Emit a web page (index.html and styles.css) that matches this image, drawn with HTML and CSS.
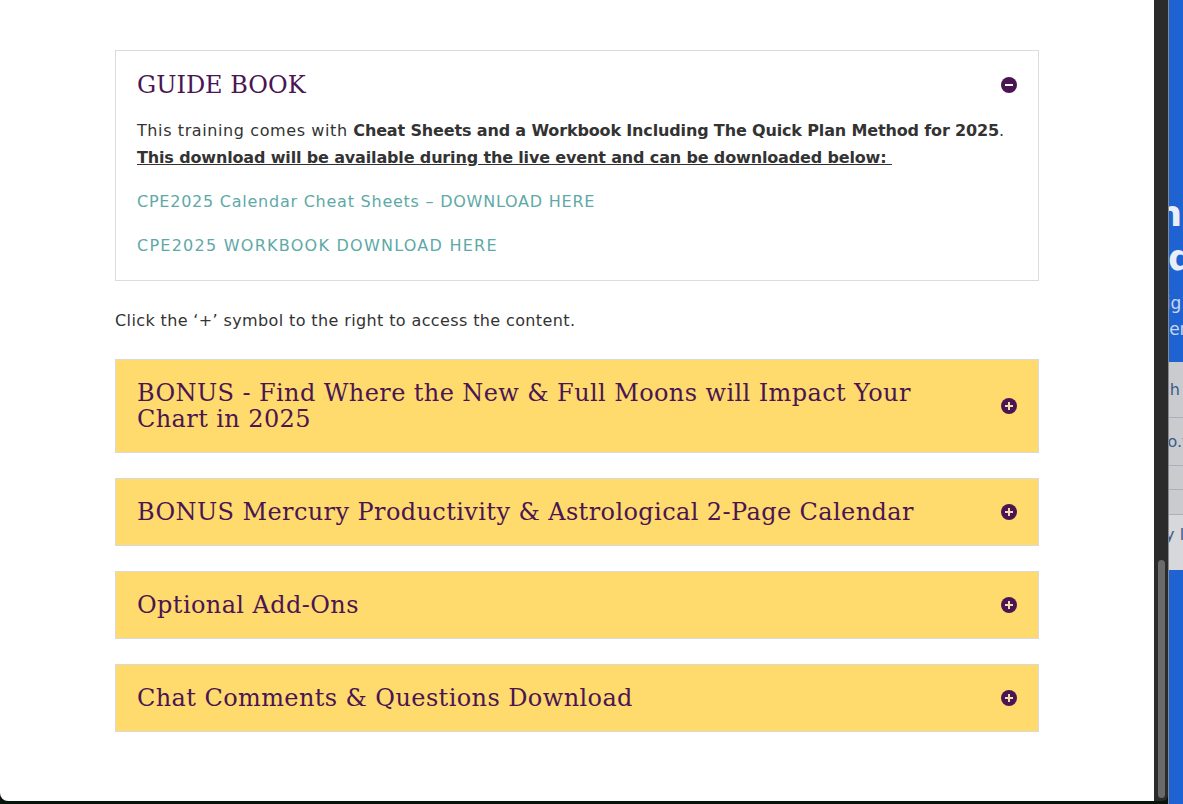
FILE: index.html
```html
<!DOCTYPE html>
<html lang="en">
<head>
<meta charset="utf-8">
<title>Guide Book</title>
<link rel="stylesheet" href="styles.css">
</head>
<body>
<div class="screen">
  <div class="window">
    <main class="content">
      <section class="guide">
        <div class="guide-head">
          <h2 class="guide-title">GUIDE BOOK</h2>
          <span class="icon minus"></span>
        </div>
        <p class="guide-text">This training comes with <strong>Cheat Sheets and a Workbook Including The Quick Plan Method for 2025</strong>.<br><strong class="ul">This download will be available during the live event and can be downloaded below:&nbsp;</strong></p>
        <p class="guide-link"><a class="link-1" href="#">CPE2025 Calendar Cheat Sheets – DOWNLOAD HERE</a></p>
        <p class="guide-link last"><a class="link-2" href="#">CPE2025 WORKBOOK DOWNLOAD HERE</a></p>
      </section>
      <p class="hint">Click the ‘+’ symbol to the right to access the content.</p>
      <div class="toggle">
        <h3 class="toggle-title">BONUS - Find Where the New &amp; Full Moons will Impact Your Chart in 2025</h3>
        <span class="icon plus"></span>
      </div>
      <div class="toggle">
        <h3 class="toggle-title">BONUS Mercury Productivity &amp; Astrological 2-Page Calendar</h3>
        <span class="icon plus"></span>
      </div>
      <div class="toggle">
        <h3 class="toggle-title">Optional Add-Ons</h3>
        <span class="icon plus"></span>
      </div>
      <div class="toggle">
        <h3 class="toggle-title">Chat Comments &amp; Questions Download</h3>
        <span class="icon plus"></span>
      </div>
    </main>
  </div>
  <div class="scrollbar"><div class="thumb"></div></div>
  <div class="side">
    <div class="side-blue">
      <div class="side-big b1">Learn</div>
      <div class="side-big b2">Ld</div>
      <div class="side-small s1">Big</div>
      <div class="side-small s2">Ther</div>
    </div>
    <div class="side-list">
      <div class="side-row r1"><span class="t1">Each t</span></div>
      <div class="side-row r2"><span class="t2">Info.v</span></div>
      <div class="side-row r3"></div>
      <div class="side-row r4"></div>
      <div class="side-row r5"><span class="t3">Any l</span></div>
    </div>
    <div class="side-blue2"></div>
  </div>
</div>
</body>
</html>
```

FILE: styles.css
```css
* { box-sizing: border-box; }
html, body { margin: 0; padding: 0; }
body {
  width: 1183px;
  height: 804px;
  overflow: hidden;
  background: #07140b;
}
.screen {
  display: flex;
  height: 804px;
}
.window {
  width: 1154px;
  height: 801px;
  background: #ffffff;
  border-bottom-left-radius: 8px;
  overflow: hidden;
}
.content {
  width: 924px;
  margin: 50px 0 0 115px;
  font-family: "DejaVu Sans", sans-serif;
  color: #333333;
}
.guide {
  border: 1px solid #dcdcdc;
  padding: 21px 21px 21px 21px;
}
.guide-head {
  display: flex;
  align-items: center;
  justify-content: space-between;
  margin-bottom: 19px;
}
.guide-title, .toggle-title {
  margin: 0;
  font-family: "DejaVu Serif", serif;
  font-weight: normal;
  font-size: 24px;
  line-height: 26px;
  color: #4b1553;
}
.toggle-title {
  letter-spacing: 0.4px;
  max-width: 800px;
}
.guide-text {
  margin: 0 0 17px;
  font-size: 16px;
  line-height: 27px;
  letter-spacing: 0.6px;
}
.guide-text strong {
  font-weight: bold;
  letter-spacing: -0.15px;
}
.ul { text-decoration: underline; }
.guide-link {
  margin: 0 0 17px;
  font-size: 16px;
  line-height: 27px;
}
.guide-link.last { margin-bottom: 0; }
.guide-link a {
  color: #5ea9a7;
  text-decoration: none;
}
.link-1 { letter-spacing: 0.76px; }
.link-2 { letter-spacing: 1.25px; }
.hint {
  margin: 26px 0 25px;
  font-size: 16px;
  line-height: 27px;
  letter-spacing: 0.38px;
}
.toggle {
  display: flex;
  align-items: center;
  justify-content: space-between;
  background: #fedb6c;
  border: 1px solid #d9d9d9;
  padding: 20px 21px 20px 21px;
  margin-bottom: 25px;
}
.icon {
  position: relative;
  flex: none;
  width: 16px;
  height: 16px;
  border-radius: 50%;
  background: #4b1553;
}
.icon::before {
  content: "";
  position: absolute;
  left: 4px;
  top: 7px;
  width: 8px;
  height: 2px;
  background: #ffffff;
}
.icon.plus::before { background: #f3dcae; }
.icon.plus::after {
  content: "";
  position: absolute;
  left: 7px;
  top: 4px;
  width: 2px;
  height: 8px;
  background: #f3dcae;
}
.scrollbar {
  width: 14px;
  height: 801px;
  background: #2b2b2b;
  border-bottom-right-radius: 6px;
  display: flex;
  flex-direction: column;
  justify-content: flex-end;
  padding: 0 3px 3px 4px;
}
.thumb {
  height: 238px;
  background: #6a6a6a;
  border-radius: 4px;
}
.side {
  width: 15px;
  border-left: 1px solid #8a8a8a;
  overflow: hidden;
  display: flex;
  flex-direction: column;
  font-family: "DejaVu Sans", sans-serif;
  white-space: nowrap;
}
.side-blue {
  height: 362px;
  background: #1f63d2;
  padding-top: 192px;
  color: #e9eef8;
}
.side-big {
  font-size: 36px;
  font-weight: bold;
  line-height: 44px;
}
.b1 { margin-left: -102px; }
.b2 { margin-left: -24px; }
.side-small {
  font-size: 17px;
  line-height: 26px;
  color: #c9d6f0;
}
.s1 { margin-left: -15px; margin-top: 10px; }
.s2 { margin-left: -21px; }
.side-list {
  height: 208px;
  background: #c9cbce;
  color: #3d5a8a;
  font-size: 16px;
}
.side-row {
  border-bottom: 1px solid #a9b1bd;
  display: flex;
  align-items: center;
}
.r1 { height: 56px; }
.r2 { height: 48px; }
.r3 { height: 24px; }
.r4 { height: 25px; }
.r5 { height: 55px; border-bottom: none; background: #d6d8db; align-items: flex-start; padding-top: 10px; }
.t1 { margin-left: -28px; }
.t2 { margin-left: -22px; }
.t3 { margin-left: -25px; }
.side-blue2 {
  flex: 1;
  background: #1f63d2;
}
```
